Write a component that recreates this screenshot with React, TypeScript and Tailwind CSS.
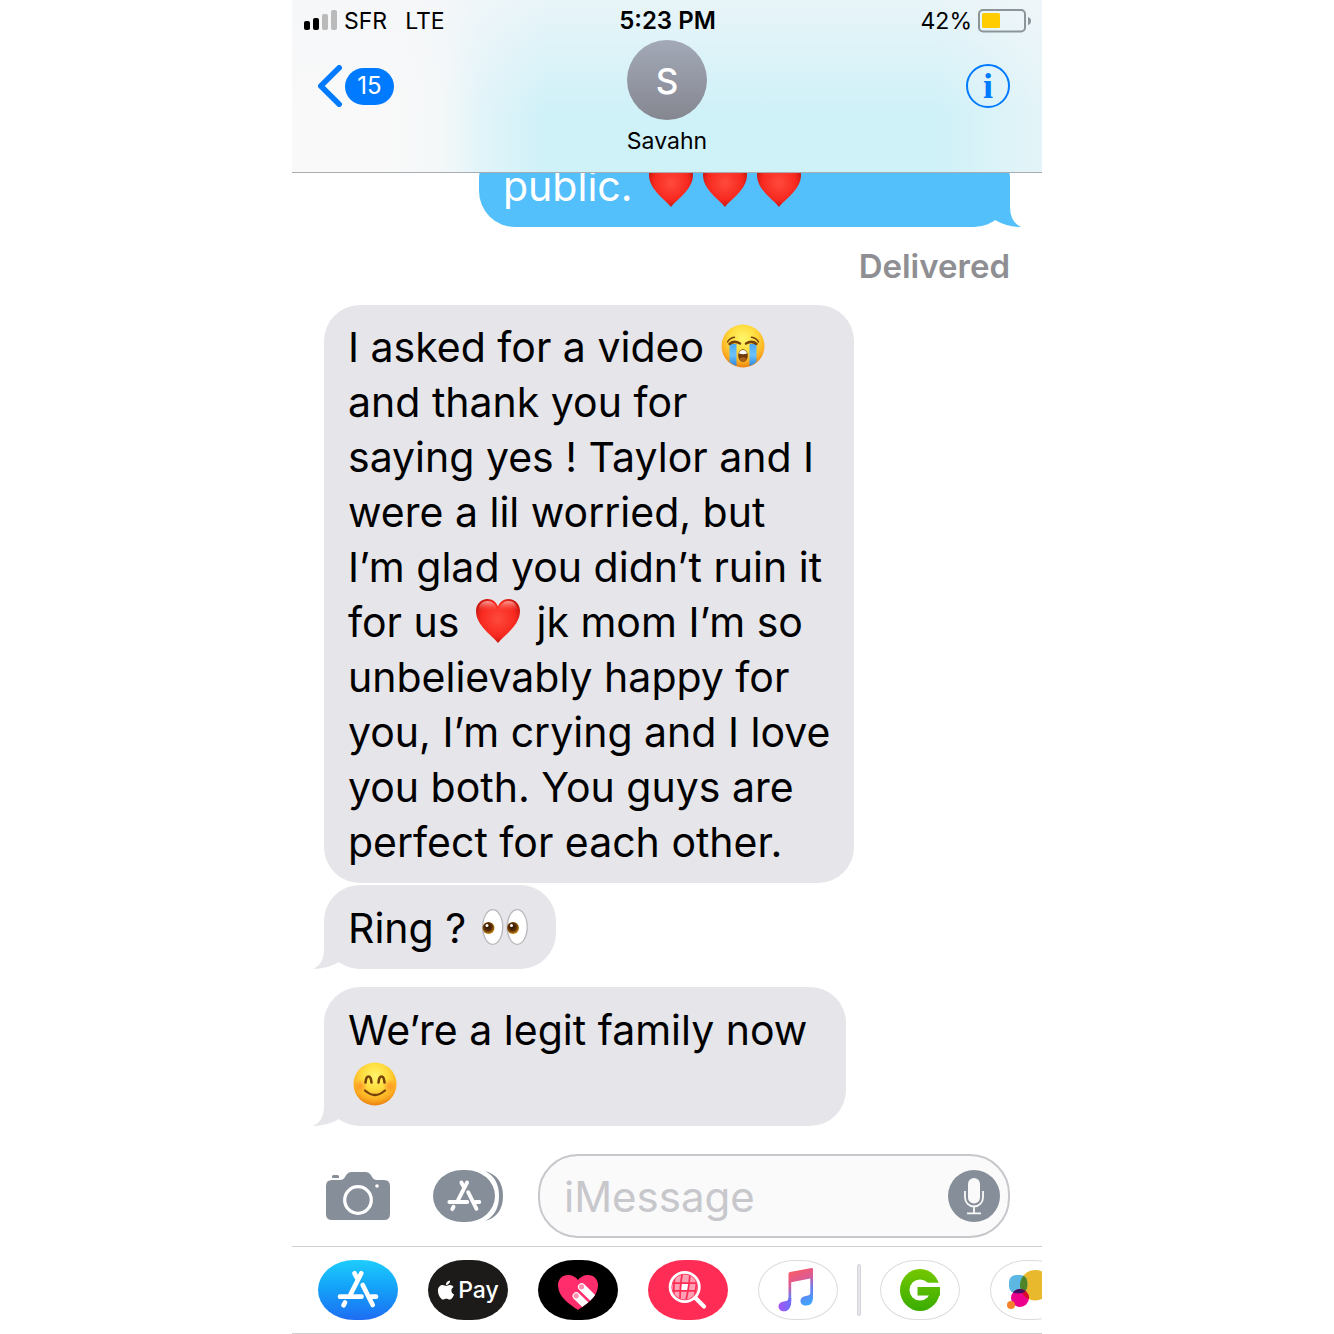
import type { ReactNode } from "react";
import { FaApple } from "react-icons/fa";
import { clsx } from "clsx";

const EMOJI = "mx-[5px] inline-block h-[44px] w-[44px] align-[-6px]";

function Heart() {
  return (
    <svg viewBox="0 0 44 44" className={EMOJI} role="img" aria-label="red heart">
      <defs>
        <radialGradient id="heart" cx="50%" cy="45%" r="60%">
          <stop offset="0" stopColor="#ff4a3d" />
          <stop offset="0.65" stopColor="#f8291f" />
          <stop offset="1" stopColor="#b80f0c" />
        </radialGradient>
        <linearGradient id="heartShine" x1="0" y1="0" x2="0" y2="1">
          <stop offset="0" stopColor="#ffc4bd" stopOpacity="0.8" />
          <stop offset="1" stopColor="#ff4a3d" stopOpacity="0" />
        </linearGradient>
      </defs>
      <path
        d="M22 44C17 37 0 27 0 12 0 5 5 0 11.500 0 16.500 0 20.500 3 22 7.500 23.500 3 27.500 0 32.500 0 39 0 44 5 44 12 44 27 27 37 22 44Z"
        fill="url(#heart)"
      />
      <path
        d="M2.500 11C3 5 7 2 11.500 2 16 2 19.500 5 21 10 15 13 8 13 2.500 11ZM41.500 11C41 5 37 2 32.500 2 28 2 24.500 5 23 10 29 13 36 13 41.500 11Z"
        fill="url(#heartShine)"
      />
    </svg>
  );
}

function FaceFill({ id }: { id: string }) {
  return (
    <>
      <defs>
        <radialGradient id={id} cx="50%" cy="32%" r="68%">
          <stop offset="0" stopColor="#fff56b" />
          <stop offset="0.45" stopColor="#ffdc3e" />
          <stop offset="0.8" stopColor="#fdae22" />
          <stop offset="1" stopColor="#e9800e" />
        </radialGradient>
      </defs>
      <circle cx="22" cy="22" r="21.5" fill={`url(#${id})`} />
    </>
  );
}

function Crying() {
  return (
    <svg viewBox="0 0 44 44" className={EMOJI} role="img" aria-label="loudly crying face">
      <FaceFill id="cryFace" />
      <defs>
        <linearGradient id="tear" x1="0" y1="0" x2="0" y2="1">
          <stop offset="0" stopColor="#4aa6f0" />
          <stop offset="0.5" stopColor="#6cc3fa" />
          <stop offset="1" stopColor="#2b86e0" />
        </linearGradient>
      </defs>
      <path d="M8.500 20H15.500V42Q11.500 40.500 8.500 38ZM28.500 20H35.500V38Q32.500 40.500 28.500 42Z" fill="url(#tear)" />
      <g fill="none" stroke="#75400a" strokeLinecap="round">
        <path d="M6.500 18Q8.500 14 13.500 13.300M37.500 18Q35.500 14 30.500 13.300" strokeWidth="1.500" />
        <path d="M8.500 20Q13 16 19 19.500M35.500 20Q31 16 25 19.500" strokeWidth="2.500" />
      </g>
      <ellipse cx="22" cy="31.500" rx="4.800" ry="6.300" fill="#6f3a0c" />
      <path d="M18 29.500Q18.500 26 22 26T26 29.500Q22 31 18 29.500Z" fill="#fff" />
      <path d="M18.500 34.500Q22 32 25.500 34.500 24.500 37.500 22 37.500T18.500 34.500Z" fill="#a8621c" />
    </svg>
  );
}

function Smile() {
  return (
    <svg viewBox="0 0 44 44" className={EMOJI} role="img" aria-label="smiling face">
      <FaceFill id="smileFace" />
      <defs>
        <radialGradient id="blush">
          <stop offset="0" stopColor="#ff6a1f" stopOpacity="0.5" />
          <stop offset="1" stopColor="#ff6a1f" stopOpacity="0" />
        </radialGradient>
      </defs>
      <circle cx="7.500" cy="24" r="7" fill="url(#blush)" />
      <circle cx="36.500" cy="24" r="7" fill="url(#blush)" />
      <g fill="none" stroke="#75400a" strokeLinecap="round">
        <path d="M12.500 20.500Q13 14.500 15.500 14.500T18.500 20.500M25.500 20.500Q26 14.500 28.500 14.500T31.500 20.500" strokeWidth="2.600" />
        <path d="M12 28.500Q22 37.500 32 28.500" strokeWidth="2.200" />
      </g>
    </svg>
  );
}

function Eyes() {
  return (
    <svg viewBox="0 0 46 44" className="mx-1 inline-block h-[44px] w-[46px] align-[-6px]" role="img" aria-label="eyes">
      <defs>
        <radialGradient id="iris" cx="45%" cy="40%" r="60%">
          <stop offset="0" stopColor="#2a1303" />
          <stop offset="0.55" stopColor="#5a2d04" />
          <stop offset="1" stopColor="#c88a12" />
        </radialGradient>
      </defs>
      {[0, 24.5].map((x) => (
        <g key={x}>
          <ellipse cx={x + 10.7} cy="22" rx="10" ry="17.300" fill="#fff" stroke="#b9b9bd" strokeWidth="1.300" />
          <circle cx={x + 6.5} cy="23" r="6" fill="url(#iris)" />
          <circle cx={x + 5} cy="20.500" r="1.500" fill="#fff" />
        </g>
      ))}
    </svg>
  );
}

type BubbleProps = {
  children: ReactNode;
  sent?: boolean;
  tail?: boolean;
  className?: string;
};

function Bubble({ children, sent, tail, className = "w-fit" }: BubbleProps) {
  return (
    <div
      className={clsx(
        "relative max-w-full rounded-[36px] px-6 pb-[13px] text-[41px] leading-[55px]",
        tail ? "pt-4" : "pt-[15px]",
        sent ? "bg-[#54c0fb] text-white" : "bg-[#e5e5ea] text-black",
        className,
      )}
    >
      {children}
      {tail && (
        <svg
          viewBox="0 0 30 36"
          aria-hidden="true"
          className={clsx(
            "absolute bottom-0 h-[36px] w-[30px]",
            sent ? "-right-[11px] -scale-x-100 text-[#54c0fb]" : "-left-[11px] text-[#e5e5ea]",
          )}
        >
          <path d="M11 0V16Q11 31 0 36Q14 36 26 29L30 20L20 0Z" fill="currentColor" />
        </svg>
      )}
    </div>
  );
}

function StoreMark() {
  return (
    <g fill="none" stroke="currentColor" strokeWidth="4.700" strokeLinecap="round">
      <path d="M43.300 13.300L32.500 34.500M36.500 13.300L39 18M44.700 25L54.700 45M22 36.700H43.500M53.500 36.700H58M27 42.500L25.500 45.300" />
    </g>
  );
}

function StatusBar() {
  return (
    <div className="grid h-10 grid-cols-3 items-center pt-[2px] pr-[11px] pl-3 text-[23px] leading-6">
      <div className="flex items-center">
        <div className="mb-[2px] flex items-end gap-[3px]">
          <span className="h-[9px] w-[6px] rounded-xs bg-black" />
          <span className="h-[12px] w-[6px] rounded-xs bg-black" />
          <span className="h-[16px] w-[6px] rounded-xs bg-[#bababa]" />
          <span className="h-[20px] w-[6px] rounded-xs bg-[#bababa]" />
        </div>
        <span className="ml-[7px]">SFR</span>
        <span className="ml-[18px]">LTE</span>
      </div>
      <span className="text-center text-[24px] font-semibold">5:23 PM</span>
      <div className="flex items-center justify-end">
        <span>42%</span>
        <svg viewBox="0 0 53 24" className="ml-[6px] h-6 w-[53px]" role="img" aria-label="battery">
          <rect x="1" y="1" width="46" height="21.500" rx="4" fill="none" stroke="#8b9499" strokeWidth="2" />
          <rect x="4" y="4" width="18" height="15" rx="1.500" fill="#ffcc00" />
          <path d="M50 8Q53 9 53 12T50 16Z" fill="#8b9499" />
        </svg>
      </div>
    </div>
  );
}

function Header() {
  return (
    <header className="border-b border-[#a7adb0] bg-[linear-gradient(to_bottom,#f4f6f9b0,#f4f6f900_65%),linear-gradient(to_right,#f9f9f9_12%,#f4f8f9_20%,#e2f4f9_25%,#cff1f8_34%,#cff1f8_86%,#e4f4f8_100%)]">
      <StatusBar />
      <div className="grid h-[132px] grid-cols-3 items-start">
        <button type="button" aria-label="Back, 15 unread" className="mt-6 ml-[26px] flex h-11 w-fit items-center gap-[3px]">
          <svg viewBox="0 0 24 42" className="h-[42px] w-6" fill="none" stroke="#007aff" strokeWidth="5.500" strokeLinecap="round" strokeLinejoin="round">
            <path d="M21.200 2.800L2.800 21L21.200 39.200" />
          </svg>
          <span className="flex h-[37px] w-[49px] items-center justify-center rounded-full bg-[#007aff] text-[24px] text-white">
            15
          </span>
        </button>
        <div className="flex flex-col items-center">
          <div className="flex size-20 items-center justify-center rounded-full bg-linear-to-b from-[#a3a9b8] to-[#858790] pt-[2px] text-[35px] font-medium text-white">
            S
          </div>
          <h1 className="mt-2 text-[23px] leading-[26px]">Savahn</h1>
        </div>
        <button
          type="button"
          aria-label="Info"
          className="mt-6 mr-8 flex size-11 items-center justify-center justify-self-end rounded-full border-2 border-[#007aff] font-['Liberation_Serif',serif] text-[36px] leading-10 font-bold text-[#007aff]"
        >
          i
        </button>
      </div>
    </header>
  );
}

function Composer() {
  return (
    <form className="flex items-center px-8 pt-7 pb-2">
      <button type="button" aria-label="Camera" className="ml-[2px]">
        <svg viewBox="0 0 64 48" className="h-12 w-16" fill="#868e99">
          <path d="M6 8H14Q17.500 8 19 5L20.500 2.500Q22 0 25 0H40Q43 0 44.500 2.500L46 5Q47.500 8 50 8H58Q64 8 64 14V42Q64 48 58 48H6Q0 48 0 42V14Q0 8 6 8Z" />
          <path d="M6 6V4.500Q6 3 7.500 3H11.500Q13 3 13 4.500V6Z" />
          <circle cx="32" cy="28" r="13.300" fill="none" stroke="#fff" strokeWidth="3.300" />
          <circle cx="51" cy="14" r="1.800" fill="#fff" />
        </svg>
      </button>
      <button type="button" aria-label="Apps" className="ml-[43px]">
        <svg viewBox="0 0 70 52" className="h-[52px] w-[70px] text-white">
          <rect width="62" height="52" rx="29" ry="26" fill="#868e99" />
          <path d="M52 1Q70 6 70 26T52 51Q66 44 66 26T52 1Z" fill="#868e99" />
          <g transform="translate(-1.900 1.500) scale(0.83)">
            <StoreMark />
          </g>
        </svg>
      </button>
      <div className="ml-[35px] flex h-[84px] min-w-0 flex-1 items-center rounded-[40px] border-2 border-[#c7c7cc] bg-[#fafafa] pr-2 pl-6">
        <input
          type="text"
          aria-label="iMessage"
          placeholder="iMessage"
          className="h-[60px] min-w-0 flex-1 bg-transparent text-[42px] outline-none placeholder:text-[#c7c7cc]"
        />
        <button type="button" aria-label="Record audio">
          <svg viewBox="0 0 52 52" className="size-[52px]">
            <circle cx="26" cy="26" r="26" fill="#868e99" />
            <rect x="20" y="8" width="12" height="25.500" rx="6" fill="#fafafa" />
            <path d="M17 21V27.500A9 9 0 0 0 35 27.500V21M26 36.500V43M19 43.300H33" fill="none" stroke="#fafafa" strokeWidth="1.800" />
          </svg>
        </button>
      </div>
    </form>
  );
}

function AppPill({ label, className, children }: { label: string; className: string; children: ReactNode }) {
  return (
    <button
      type="button"
      aria-label={label}
      className={clsx("flex h-[60px] w-20 shrink-0 items-center justify-center overflow-hidden rounded-[36px/30px]", className)}
    >
      {children}
    </button>
  );
}

const ART = "h-[60px] w-20 shrink-0";
const OUTLINED = "border border-[#dcdcde] bg-white";

function AppStrip() {
  return (
    <nav aria-label="iMessage apps" className="flex items-center overflow-hidden border-y border-[#cfcfd2] py-[13px] pl-[26px]">
      <div className="flex shrink-0 gap-[30px]">
        <AppPill label="App Store" className="bg-linear-to-b from-[#1fcdfc] to-[#1f6cf2]">
          <svg viewBox="0 0 80 60" className={clsx(ART, "text-white")}>
            <StoreMark />
          </svg>
        </AppPill>
        <AppPill label="Apple Pay" className="gap-[3px] bg-[#1c1b19] text-white">
          <FaApple className="h-[22px] w-[18px]" />
          <span className="text-[23px] leading-7 font-medium">Pay</span>
        </AppPill>
        <AppPill label="Digital Touch" className="bg-black">
          <svg viewBox="0 0 80 60" className={ART}>
            <defs>
              <clipPath id="touchHeart">
                <path d="M40 50C34 45.500 20 38 20 25 20 19 24.500 15 30 15 34.500 15 38 17 40 20 42 17 45.500 15 50 15 55.500 15 60 19 60 25 60 38 46 45.500 40 50Z" />
              </clipPath>
            </defs>
            <g clipPath="url(#touchHeart)">
              <rect width="80" height="60" fill="#ff2d6b" />
              <g stroke="#fff" strokeWidth="7.500" strokeLinecap="round">
                <path d="M43.700 27L60 43M38.300 36L55 52" />
              </g>
              <circle cx="43.500" cy="26.800" r="2.600" fill="#ff8fae" />
              <circle cx="38.200" cy="35.800" r="2.600" fill="#ff8fae" />
            </g>
          </svg>
        </AppPill>
        <AppPill label="Images" className="bg-[#ff2d55]">
          <svg viewBox="0 0 80 60" className={ART}>
            <defs>
              <clipPath id="globe">
                <circle cx="36.700" cy="27" r="12.500" />
              </clipPath>
            </defs>
            <g clipPath="url(#globe)">
              <rect x="22" y="12" width="30" height="30" fill="#ffa0b4" />
              <path d="M34 24H40L39 31H33Z" fill="#fff" />
              <g fill="none" stroke="#ff2d55" strokeWidth="1.700">
                <path d="M22 23.200H52M22 30.800H52M34.500 12Q33 20 32.500 27T32 42M42 12Q41.500 22 40.500 28T37.500 42M28 12Q25 22 26 42M48 12Q50 24 45 42" />
              </g>
            </g>
            <circle cx="36.700" cy="27" r="14.600" fill="none" stroke="#fff" strokeWidth="2.800" />
            <path d="M47.500 38L56 46.500" stroke="#fff" strokeWidth="4.200" strokeLinecap="round" />
          </svg>
        </AppPill>
        <AppPill label="Music" className={OUTLINED}>
          <svg viewBox="0 0 80 60" className={ART}>
            <defs>
              <linearGradient id="note" x1="0.300" y1="0" x2="0.600" y2="1">
                <stop offset="0" stopColor="#fb5b63" />
                <stop offset="0.350" stopColor="#dd5a92" />
                <stop offset="0.650" stopColor="#6f7af0" />
                <stop offset="1" stopColor="#3fa2fb" />
              </linearGradient>
              <linearGradient id="noteHead" x1="0" y1="0" x2="1" y2="0">
                <stop offset="0" stopColor="#a855f7" />
                <stop offset="1" stopColor="#6a70fb" />
              </linearGradient>
            </defs>
            <path
              d="M30.500 14Q30.500 12.300 32 12L53.500 8Q55 7.800 55 9.300V37C55 42 53 45.500 48 45.500 44.500 45.500 42.500 43.500 42.500 41 42.500 38 45 36.500 48 36 51 35.500 52.300 35 52.300 32.500V18.500L33.200 22.200V41H30.500Z"
              fill="url(#note)"
            />
            <path d="M33.200 38V42C33.200 48 30 51.300 26 51.300 22.500 51.300 20.500 49 20.500 46.500 20.500 43.500 23 42 26 41.500 29 41 30.500 40.500 30.500 38Z" fill="url(#noteHead)" />
          </svg>
        </AppPill>
      </div>
      <span className="mx-[19px] h-[52px] w-1 shrink-0 rounded-xs border border-[#d5d5dc] bg-[#e5e5ea]" />
      <div className="flex shrink-0 gap-[30px]">
        <AppPill label="Groupon" className={OUTLINED}>
          <svg viewBox="0 0 80 60" className={ART}>
            <defs>
              <linearGradient id="leaf" gradientUnits="userSpaceOnUse" x1="0" y1="9" x2="0" y2="51">
                <stop offset="0" stopColor="#74c800" />
                <stop offset="1" stopColor="#39ac00" />
              </linearGradient>
            </defs>
            <ellipse cx="40" cy="30" rx="20" ry="21" fill="url(#leaf)" />
            <circle cx="40" cy="30" r="10.500" fill="#fff" />
            <rect x="45" y="22.700" width="16" height="4.300" fill="#fff" />
            <rect x="37.500" y="27" width="22.500" height="8.500" fill="url(#leaf)" />
          </svg>
        </AppPill>
        <AppPill label="GamePigeon" className={OUTLINED}>
          <svg viewBox="0 0 80 60" className={ART}>
            <defs>
              <clipPath id="yellowDisc">
                <circle cx="45.300" cy="25.300" r="15.300" />
              </clipPath>
              <clipPath id="pinkDisc">
                <circle cx="30" cy="38" r="9" />
              </clipPath>
            </defs>
            <circle cx="45.300" cy="25.300" r="15.300" fill="#e8b92d" />
            <rect x="19" y="15" width="18.300" height="18.300" rx="7" fill="#5cb8e0" />
            <rect x="19" y="15" width="18.300" height="18.300" rx="7" fill="#4f8526" clipPath="url(#yellowDisc)" />
            <circle cx="30" cy="38" r="9" fill="#ec008c" />
            <circle cx="45.300" cy="25.300" r="15.300" fill="#d60b26" clipPath="url(#pinkDisc)" />
            <rect x="19" y="15" width="18.300" height="18.300" rx="7" fill="#3c1160" clipPath="url(#pinkDisc)" />
            <circle cx="21" cy="45" r="4" fill="#f5822b" />
          </svg>
        </AppPill>
      </div>
    </nav>
  );
}

export default function App() {
  return (
    <div className="min-h-screen bg-white font-[Inter,sans-serif] text-black">
      <div className="mx-auto w-full max-w-[750px]">
        <Header />
        <main>
          {/* older message, scrolled partly under the header */}
          <div className="flex h-[54px] items-end justify-end overflow-hidden px-8">
            <Bubble sent tail className="w-[531px]">
              public. <Heart />
              <Heart />
              <Heart />
            </Bubble>
          </div>
          <p className="flex h-[78px] items-center justify-end px-8 pt-[2px] text-[33px] font-semibold text-[#8e8e93]">
            Delivered
          </p>
          <div className="flex flex-col gap-[2px] px-8">
            <Bubble>
              I asked for a video <Crying />
              <br />
              and thank you for
              <br />
              saying yes ! Taylor and I
              <br />
              were a lil worried, but
              <br />
              I’m glad you didn’t ruin it
              <br />
              for us <Heart /> jk mom I’m so
              <br />
              unbelievably happy for
              <br />
              you, I’m crying and I love
              <br />
              you both. You guys are
              <br />
              perfect for each other.
            </Bubble>
            <Bubble tail>
              Ring ? <Eyes />
            </Bubble>
          </div>
          <div className="mt-[18px] px-8">
            <Bubble tail className="w-[522px]">
              We’re a legit family now
              <br />
              <Smile />
            </Bubble>
          </div>
        </main>
        <Composer />
        <AppStrip />
      </div>
    </div>
  );
}
